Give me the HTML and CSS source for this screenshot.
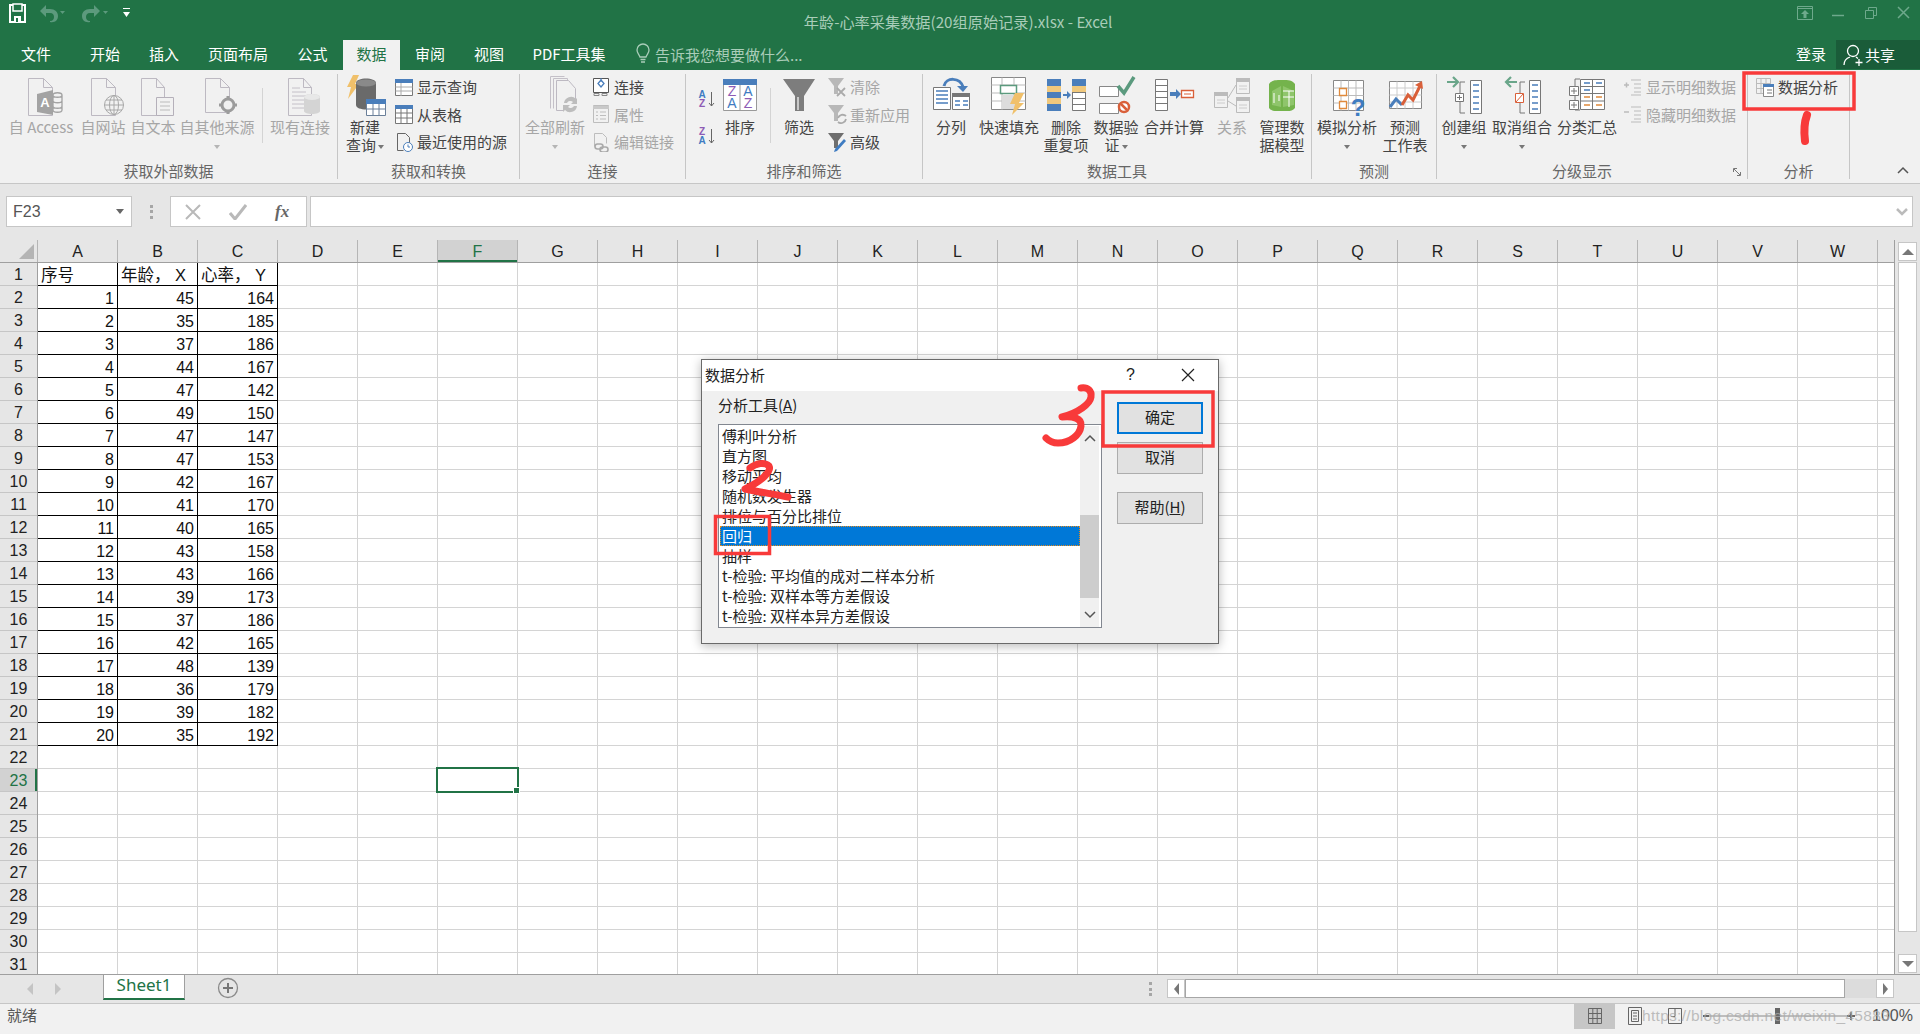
FILE: index.html
```html
<!DOCTYPE html>
<html lang="zh-CN">
<head>
<meta charset="utf-8">
<title>年龄-心率采集数据(20组原始记录).xlsx - Excel</title>
<link rel="stylesheet" href="styles.css">
</head>
<body>
<div class="app">
  <header class="titlebar">
    <div class="qat">
      <svg class="qat-save" width="20" height="20" viewBox="0 0 20 20"><path d="M2 2h15v17H2z" fill="none" stroke="#fff" stroke-width="2"/><path d="M5 1h9v7H5z" fill="#217346" stroke="#fff" stroke-width="1.5"/><path d="M6 13h7v6H6z" fill="#fff"/><path d="M8 15h2v4H8z" fill="#217346"/></svg>
      <svg class="qat-undo" width="28" height="20" viewBox="0 0 28 20"><path d="M9 2 3 8l6 6V10h4c3 0 4 2 4 4s-1 4-4 4v1c5 1 8-2 8-6s-3-7-8-7H9z" fill="#5c9a7d"/><path d="M23 8h5l-2.500 3z" fill="#5c9a7d"/></svg>
      <svg class="qat-redo" width="28" height="20" viewBox="0 0 28 20"><path d="M14 2l6 6-6 6V10h-4c-3 0-4 2-4 4s1 4 4 4v1c-5 1-8-2-8-6s3-7 8-7h4z" fill="#5c9a7d"/><path d="M23 8h5l-2.500 3z" fill="#5c9a7d"/></svg>
      <svg class="qat-more" width="10" height="12" viewBox="0 0 10 12"><path d="M1 1h7v1H1z M1 5h7L4.500 10z" fill="#fff"/></svg>
    </div>
    <div class="doc-title">年龄-心率采集数据(20组原始记录).xlsx - Excel</div>
    <div class="winctl">
      <svg width="33" height="26" viewBox="0 0 33 26"><path d="M9.500 6.500h15v13h-15z M9.500 8.500h15" fill="none" stroke="#6ea98c"/><path d="M17 10l4 4h-2.500v4h-3v-4H13z" fill="#6ea98c"/></svg>
      <svg width="33" height="26" viewBox="0 0 33 26"><path d="M11 15.500h12" stroke="#6ea98c" stroke-width="1.500"/></svg>
      <svg width="33" height="26" viewBox="0 0 33 26"><path d="M11.500 10.500h8v8h-8z M14.500 10V7.500h8v8H20" fill="none" stroke="#6ea98c"/></svg>
      <svg width="33" height="26" viewBox="0 0 33 26"><path d="M11 7l11 11M22 7 11 18" stroke="#6ea98c" stroke-width="1.500"/></svg>
    </div>
  </header>

  <nav class="tabs">
    <div class="tab t72">文件</div>
    <div class="tab t66">开始</div>
    <div class="tab t52">插入</div>
    <div class="tab t92">页面布局</div>
    <div class="tab t61">公式</div>
    <div class="tab t57 tab-on">数据</div>
    <div class="tab t60">审阅</div>
    <div class="tab t58">视图</div>
    <div class="tab t102">PDF工具集</div>
    <div class="tellme">
      <svg width="16" height="24" viewBox="0 0 16 24"><path d="M8 2a6 6 0 0 0-6 6c0 3 2 4 3 7h6c1-3 3-4 3-7a6 6 0 0 0-6-6zM5.500 17.500h5M6 20h4" fill="none" stroke="#a9cdb9" stroke-width="1.300"/></svg>
      <span>告诉我您想要做什么...</span>
    </div>
    <div class="signin">登录</div>
    <div class="share">
      <svg width="22" height="24" viewBox="0 0 22 24"><circle cx="10" cy="8" r="5.500" fill="none" stroke="#fff" stroke-width="1.300"/><path d="M1 22c0-5 3-7 6-8M13 14l2 1.500M16 16v7M12.500 19.500h7" fill="none" stroke="#fff" stroke-width="1.300"/></svg>
      <span>共享</span>
    </div>
  </nav>

  <section class="ribbon">
    <div class="group g1">
      <div class="g-body pl5">
        <div class="big w72 off"><svg class="ico" viewBox="0 0 44 44"><path d="M9.500 5.500h15l9 9v28h-24zM24.500 5.500v9h9" fill="none" stroke="#bdb9c2"/><path d="M18 21l16-4v25l-16-3z" fill="#a3a3a3"/><text x="26" y="34" class="ico-t" fill="#fff">A</text><path d="M34 22c0-3 9-3 9 0v15c0 3-9 3-9 0zM34 22c0 3 9 3 9 0M34 27.500c0 3 9 3 9 0M34 33c0 3 9 3 9 0" fill="#f1f1f1" stroke="#a3a3a3" stroke-width="1.300"/></svg><span class="lbl">自 Access</span></div>
        <div class="big w52 off"><svg class="ico" viewBox="0 0 44 44"><path d="M10.500 5.500h15l9 9v28h-24zM25.500 5.500v9h9" fill="none" stroke="#bdb9c2"/><circle cx="33" cy="32" r="9.500" fill="#f1f1f1" stroke="#a8a8a8"/><path d="M23.500 32h19M25 27h16M25 37h16M33 22.500v19" stroke="#a8a8a8" fill="none"/><ellipse cx="33" cy="32" rx="4.500" ry="9.500" fill="none" stroke="#a8a8a8"/></svg><span class="lbl">自网站</span></div>
        <div class="big w48 off"><svg class="ico" viewBox="0 0 44 44"><path d="M10.500 5.500h15l8 9v28h-23zM25.500 5.500v9h8" fill="none" stroke="#bdb9c2"/><path d="M25.500 24.500h17v18h-17z" fill="#f1f1f1" stroke="#b5b0ba"/><path d="M29 29h10M29 33h10M29 37h10" stroke="#bbb"/></svg><span class="lbl">自文本</span></div>
        <div class="big w80 off"><svg class="ico" viewBox="0 0 44 44"><path d="M10.500 5.500h15l9 9v25h-24zM25.500 5.500v9h9" fill="none" stroke="#bdb9c2"/><circle cx="33" cy="32" r="6" fill="#f1f1f1" stroke="#9c9c9c" stroke-width="3"/><path d="M33 23v3M33 38v3M24 32h3M39 32h3" stroke="#9c9c9c" stroke-width="3"/></svg><span class="lbl">自其他来源<br><i class="caret"></i></span></div>
        <div class="vsep m5"></div>
        <div class="big w66 off ml4"><svg class="ico" viewBox="0 0 44 44"><path d="M10.500 5.500h15l8 9v28h-23zM25.500 5.500v9h8" fill="none" stroke="#bdb9c2"/><path d="M14 15h8M14 19h14M14 23h14M14 27h12M14 31h12M14 35h12" stroke="#c4c0c8"/><path d="M26 24c0-4 16-4 16 0v14c0 4-16 4-16 0z" fill="#d4d4d4"/><ellipse cx="34" cy="24" rx="8" ry="3" fill="#e8e8e8"/></svg><span class="lbl">现有连接</span></div>
      </div>
      <div class="g-label">获取外部数据</div>
    </div>

    <div class="group g2">
      <div class="g-body">
        <div class="big w54 on"><svg class="ico" viewBox="0 0 44 44"><path d="M10 2h6l-4 9h4L5 26l3-12H4z" fill="#f0c06a"/><path d="M13 10c0-6 20-6 20 0v22c0 6-20 6-20 0z" fill="#6a6a6a"/><ellipse cx="23" cy="10" rx="10" ry="3.500" fill="#8a8a8a"/><path d="M23.500 26.500h19v16h-19z" fill="#fff" stroke="#6a7f99"/><path d="M23 26h20v5H23z" fill="#4a7ebb"/><path d="M23.500 36h19M30 31v11M36 31v11" stroke="#6a7f99"/></svg><span class="lbl">新建<br>查询<i class="caret ml2"></i></span></div>
        <div class="stack ml2">
          <div class="small"><svg class="sico" viewBox="0 0 20 20"><path d="M1.500 2.500h17v16h-17z" fill="#fff" stroke="#777"/><path d="M1 2h18v4H1z" fill="#4a7ebb"/><path d="M1.500 10h17M1.500 14h17M7 6v13" stroke="#aaa"/></svg><span>显示查询</span></div>
          <div class="small"><svg class="sico" viewBox="0 0 20 20"><path d="M1.500 1.500h17v18h-17z" fill="#fff" stroke="#777"/><path d="M1 1h18v4H1z" fill="#4a7ebb"/><path d="M1.500 9h17M1.500 14h17M7 5v14M13 5v14" stroke="#777"/></svg><span>从表格</span></div>
          <div class="small"><svg class="sico" viewBox="0 0 20 20"><path d="M3.500 1.500h8l4 4v8M3.500 1.500v17h6" fill="none" stroke="#666"/><circle cx="14" cy="15" r="4.500" fill="#fff" stroke="#4a7ebb"/><path d="M14 12.500V15h2" fill="none" stroke="#4a7ebb"/></svg><span>最近使用的源</span></div>
        </div>
      </div>
      <div class="g-label">获取和转换</div>
    </div>

    <div class="group g3">
      <div class="g-body">
        <div class="big w70 off"><svg class="ico" viewBox="0 0 44 44"><path d="M17.500 3.500h14M17.500 3.500v32M20.500 5.500h14v2M20.500 5.500v30" fill="none" stroke="#c4c0c8"/><path d="M23.500 7.500h12l7 8v14" fill="none" stroke="#bdb9c2"/><path d="M23.500 7.500v30h7" fill="none" stroke="#bdb9c2"/><path d="M31 30a7 7 0 0 1 12-4l2-2v7h-7l2-2a4 4 0 0 0-6 1zM44 33a7 7 0 0 1-12 4l-2 2v-7h7l-2 2a4 4 0 0 0 6-1z" fill="#bdbdbd"/></svg><span class="lbl">全部刷新<br><i class="caret"></i></span></div>
        <div class="stack ml1">
          <div class="small"><svg class="sico" viewBox="0 0 20 20"><path d="M2.500 1.500h15v14h-15z" fill="#fff" stroke="#555"/><path d="M10 3l3 3.500-3 3.500-3-3.500z" fill="#fff" stroke="#4a7ebb" stroke-width="1.300"/><path d="M10 1v4" stroke="#4a7ebb"/><path d="M3 16.500h5v2H3zM11 16.500h5v2h-5z" fill="none" stroke="#888"/></svg><span>连接</span></div>
          <div class="small off"><svg class="sico" viewBox="0 0 20 20"><path d="M2.500 1.500h15v17h-15z" fill="none" stroke="#bdbdbd"/><path d="M2 2h16v3H2z" fill="#c9c9c9"/><path d="M5 8h2M9 8h6M5 11.500h2M9 11.500h6M5 15h2M9 15h6" stroke="#bdbdbd"/></svg><span>属性</span></div>
          <div class="small off"><svg class="sico" viewBox="0 0 20 20"><path d="M3.500 1.500h8l4 4v6M3.500 1.500v13" fill="none" stroke="#bdbdbd"/><rect x="4" y="12" width="8" height="5" rx="2.500" fill="none" stroke="#aaa" stroke-width="1.600"/><rect x="9" y="15" width="8" height="5" rx="2.500" fill="none" stroke="#aaa" stroke-width="1.600"/></svg><span>编辑链接</span></div>
        </div>
      </div>
      <div class="g-label">连接</div>
    </div>

    <div class="group g4">
      <div class="g-body">
        <div class="sortcol">
          <svg width="20" height="20" viewBox="0 0 20 20"><text x="6" y="9.500" class="sort-t" fill="#3f7cc2">A</text><text x="6" y="19" class="sort-t" fill="#8e5bb5">Z</text><path d="M15.500 4v14M13 15l2.500 3 2.500-3" fill="none" stroke="#666"/></svg>
          <svg class="mt17" width="20" height="20" viewBox="0 0 20 20"><text x="6" y="9.500" class="sort-t" fill="#8e5bb5">Z</text><text x="6" y="19" class="sort-t" fill="#3f7cc2">A</text><path d="M15.500 4v14M13 15l2.500 3 2.500-3" fill="none" stroke="#666"/></svg>
        </div>
        <div class="big w48 on"><svg class="ico" viewBox="0 0 44 44"><path d="M5.500 6.500h33v31h-33z" fill="#fff" stroke="#999"/><path d="M5 6h34v6H5z" fill="#4a7ebb"/><path d="M22 12v25" stroke="#999"/><text x="14" y="23" class="ico-t2" fill="#8e5bb5">Z</text><text x="14" y="35" class="ico-t2" fill="#3f7cc2">A</text><text x="30" y="23" class="ico-t2" fill="#3f7cc2">A</text><text x="30" y="35" class="ico-t2" fill="#8e5bb5">Z</text></svg><span class="lbl">排序</span></div>
        <div class="vsep m6"></div>
        <div class="big w56 on"><svg class="ico" viewBox="0 0 44 44"><path d="M6 6h32L27 23v15h-9V23z" fill="#7d7d7d"/><path d="M20 24v13h2V24z" fill="#c9c9c9"/></svg><span class="lbl">筛选</span></div>
        <div class="stack">
          <div class="small off"><svg class="sico" viewBox="0 0 20 20"><path d="M1 1h16l-6 8v8H7V9z" fill="#b8b8b8"/><path d="M10 11l8 8M18 11l-8 8" stroke="#aaa" stroke-width="1.800"/></svg><span>清除</span></div>
          <div class="small off"><svg class="sico" viewBox="0 0 20 20"><path d="M1 1h16l-6 8v8H7V9z" fill="#b8b8b8"/><path d="M11 14a5 5 0 0 1 8-2M19 15a5 5 0 0 1-8 3" fill="none" stroke="#aaa" stroke-width="1.800"/></svg><span>重新应用</span></div>
          <div class="small"><svg class="sico" viewBox="0 0 20 20"><path d="M1 1h16l-6 8v7H7V9z" fill="#6e6e6e"/><path d="M17 7l2 2-9 10-3 1 1-3z" fill="#3f7cc2"/></svg><span>高级</span></div>
        </div>
      </div>
      <div class="g-label">排序和筛选</div>
    </div>

    <div class="group g5">
      <div class="g-body">
        <div class="big w56 on"><svg class="ico" viewBox="0 0 44 44"><path d="M4.500 14.500h17v22h-17z" fill="#fff" stroke="#777"/><path d="M7 18h12M7 22h12M7 26h12M7 30h12" stroke="#4a7ebb" stroke-width="1.300"/><path d="M23.500 20.500h17v16h-17z" fill="#fff" stroke="#777"/><path d="M23 20h18v4H23z" fill="#777"/><path d="M26 28h5M34 28h5M26 32h5M34 32h5" stroke="#4a7ebb" stroke-width="1.300"/><path d="M15 13c2-9 16-9 19 1" fill="none" stroke="#4a7ebb" stroke-width="3"/><path d="M28 13h11l-5 6z" fill="#4a7ebb"/></svg><span class="lbl">分列</span></div>
        <div class="big w60 on"><svg class="ico" viewBox="0 0 44 44"><path d="M4.500 4.500h34v32h-34z" fill="#fff" stroke="#888"/><path d="M4.500 12h34M4.500 20h34M4.500 28h34M15 4.500v32M27 4.500v32" stroke="#bbb"/><path d="M13.500 12.500h16v8h-16z" fill="#fff" stroke="#5b9a7e" stroke-width="1.500"/><path d="M15 22h14v14H15z" fill="#dcdcdc"/><path d="M28 20h9l-5 10h5L25 42l3-11h-5z" fill="#f0c06a"/></svg><span class="lbl">快速填充</span></div>
        <div class="big w54 on"><svg class="ico" viewBox="0 0 44 44"><path d="M3 6h14v32H3z" fill="#4a7ebb"/><path d="M3 13h14v6H3zM3 25h14v6H3z" fill="#f0c87c"/><path d="M28.500 6.500h13v31h-13z" fill="#fff" stroke="#777"/><path d="M28 6h14v7H28z" fill="#4a7ebb"/><path d="M28 13h14v6H28z" fill="#f0c87c"/><path d="M28.500 19.500h13M28.500 25.500h13M28.500 31.500h13" stroke="#777"/><path d="M19 21h4v-3l4 4-4 4v-3h-4z" fill="#4a7ebb"/></svg><span class="lbl">删除<br>重复项</span></div>
        <div class="big w46 on"><svg class="ico" viewBox="0 0 44 44"><path d="M5.500 13.500h19v10h-19zM5.500 30.500h19v10h-19z" fill="#fff" stroke="#888"/><path d="M24 13l6 7L40 4" fill="none" stroke="#5b9a7e" stroke-width="3.500"/><circle cx="30" cy="34" r="5" fill="#fff" stroke="#d9603a" stroke-width="2.500"/><path d="M27 31l6 6" stroke="#d9603a" stroke-width="2.500"/></svg><span class="lbl">数据验<br>证<i class="caret ml2"></i></span></div>
        <div class="big w70 on"><svg class="ico" viewBox="0 0 44 44"><path d="M3.500 6.500h12v31h-12zM3.500 12.500h12M3.500 18.500h12M3.500 24.500h12M3.500 30.500h12" fill="#fff" stroke="#777"/><path d="M18 19h6v-3l5 5-5 5v-3h-6z" fill="#4a7ebb"/><path d="M29.500 17.500h12v7h-12z" fill="#fff" stroke="#d9603a" stroke-width="1.300"/><path d="M32 21h7" stroke="#d9603a"/></svg><span class="lbl">合并计算</span></div>
        <div class="big w46 off"><svg class="ico" viewBox="0 0 44 44"><path d="M4.500 19.500h13v15h-13zM26.500 5.500h13v15h-13zM26.500 24.500h13v15h-13z" fill="#f1f1f1" stroke="#bbb"/><path d="M4 19h14v4H4zM26 5h14v4H26zM26 24h14v4H26z" fill="#bbb"/><path d="M18 25 26 12M18 28l8 5" stroke="#bbb"/><path d="M7 27h8M7 30h8M29 13h8M29 16h8M29 32h8M29 35h8" stroke="#ccc"/></svg><span class="lbl">关系</span></div>
        <div class="big w54 on"><svg class="ico" viewBox="0 0 44 44"><path d="M9 11c3-4 6-4 13-4s10 0 13 4v24c-3 4-7 3-13 3s-10 1-13-3z" fill="#74b34c"/><path d="M12 18l9-5v21l-9-2zM23 13l11 5v14l-11 2z" fill="#8fc56b"/><path d="M23 18h11M23 24h11M29 18v16M14 20v10" stroke="#fff"/><path d="M19 22v6" stroke="#fff"/></svg><span class="lbl">管理数<br>据模型</span></div>
      </div>
      <div class="g-label">数据工具</div>
    </div>

    <div class="group g6">
      <div class="g-body">
        <div class="big w70 on"><svg class="ico" viewBox="0 0 44 44"><path d="M8.500 7.500h30v30h-30z" fill="#fff" stroke="#888"/><path d="M8.500 15h30M8.500 22.500h30M8.500 30h30M16 7.500v30M23.500 7.500v30M31 7.500v30" stroke="#bbb"/><path d="M14.500 15.500h7v7h-7zM14.500 28.500h7v7h-7z" fill="#fff" stroke="#e08a3c" stroke-width="1.300"/><text x="33" y="43" class="ico-q" fill="#3f7cc2">?</text></svg><span class="lbl">模拟分析<br><i class="caret"></i></span></div>
        <div class="big w46 on"><svg class="ico" viewBox="0 0 44 44"><path d="M6.500 8.500h32v27h-32z" fill="#fff" stroke="#888"/><path d="M6.500 15h32M6.500 22h32M6.500 29h32M14 8.500v27M22 8.500v27M30 8.500v27" stroke="#ccc"/><path d="M7 34l6-8 6 6" fill="none" stroke="#4a7ebb" stroke-width="3"/><path d="M19 32l6-10 5 5 7-14" fill="none" stroke="#d9603a" stroke-width="3"/><path d="M32 12l7-4 1 8z" fill="#d9603a"/></svg><span class="lbl">预测<br>工作表</span></div>
      </div>
      <div class="g-label">预测</div>
    </div>

    <div class="group g7">
      <div class="g-body">
        <div class="big w54 on"><svg class="ico" viewBox="0 0 44 44"><path d="M5 9h11M11 4l5 5-5 5" fill="none" stroke="#6aa68a" stroke-width="2.200"/><path d="M23 9h-5v31h5" fill="none" stroke="#777"/><path d="M28.500 7.500h11v33h-11z" fill="#fff" stroke="#777"/><path d="M31 12h6M31 18h6M31 24h6M31 30h6M31 36h6" stroke="#4a7ebb" stroke-width="1.300"/><path d="M13.500 20.500h8v8h-8z" fill="#fff" stroke="#777"/><path d="M15 24.500h5M17.500 22v5" stroke="#777"/></svg><span class="lbl">创建组<br><i class="caret"></i></span></div>
        <div class="big w62 on"><svg class="ico" viewBox="0 0 44 44"><path d="M17 9H6M11 4 6 9l5 5" fill="none" stroke="#6aa68a" stroke-width="2.200"/><path d="M25 9h-5v31h5" fill="none" stroke="#777"/><path d="M29.500 7.500h11v33h-11z" fill="#fff" stroke="#777"/><path d="M32 12h6M32 18h6M32 24h6M32 30h6M32 36h6" stroke="#4a7ebb" stroke-width="1.300"/><path d="M15.500 20.500h8v9h-8z" fill="#fff" stroke="#d9603a"/><path d="M16 29l7-8" stroke="#d9603a"/></svg><span class="lbl">取消组合<br><i class="caret"></i></span></div>
        <div class="big w68 on"><svg class="ico" viewBox="0 0 44 44"><path d="M15 6h-5v31h5" fill="none" stroke="#777"/><path d="M4.500 13.500h9v9h-9zM4.500 27.500h9v9h-9z" fill="#fff" stroke="#777"/><path d="M6 18h6M9 15v6M6 32h6M9 29v6" stroke="#777"/><path d="M15.500 6.500h24v30h-24zM15.500 13.500h24M15.500 20.500h24M15.500 28h24M27.500 6.500v30" fill="#fff" stroke="#777"/><path d="M19 10h6M31 10h6M19 17h6" stroke="#4a7ebb" stroke-width="1.300"/><path d="M19 24h6M31 24h6M19 32h6M31 32h6" stroke="#e08a3c" stroke-width="1.300"/></svg><span class="lbl">分类汇总</span></div>
        <div class="stack ml2">
          <div class="small off"><svg class="sico" viewBox="0 0 20 20"><path d="M1 8h5M3.500 5.500v5" stroke="#bbb" stroke-width="1.500"/><path d="M8 3h10M11 7h7M11 11h7M11 15h7M8 18h10" stroke="#bbb"/></svg><span>显示明细数据</span></div>
          <div class="small off"><svg class="sico" viewBox="0 0 20 20"><path d="M1 8h5" stroke="#bbb" stroke-width="1.500"/><path d="M8 3h10M11 7h7M11 11h7M11 15h7M8 18h10" stroke="#bbb"/></svg><span>隐藏明细数据</span></div>
        </div>
      </div>
      <div class="g-label pr20">分级显示<svg class="launcher" width="9" height="9" viewBox="0 0 9 9"><path d="M.5 4V.5H4M1 1l6 6M4 7.500h3.500V4" fill="none" stroke="#777"/></svg></div>
    </div>

    <div class="group g8">
      <div class="g-body pl7">
        <div class="small"><svg class="sico" viewBox="0 0 20 20"><path d="M1.500 1.500h14v15h-14zM1.500 6.500h14M1.500 11.500h14M6 1.500v15M11 1.500v15" fill="none" stroke="#bbb"/><path d="M8.500 8.500h10v11h-10z" fill="#fff" stroke="#888"/><path d="M8 7h11v3H8z" fill="#4a7ebb"/><path d="M12 13h5M12 16h5" stroke="#777"/></svg><span>数据分析</span></div>
      </div>
      <div class="g-label">分析</div>
    </div>

    <svg class="collapse" width="12" height="8" viewBox="0 0 12 8"><path d="M1 7l5-5 5 5" fill="none" stroke="#555" stroke-width="1.500"/></svg>
  </section>

  <section class="formula">
    <div class="namebox"><span>F23</span><i class="caret caret-dark"></i></div>
    <div class="vdots"><i></i><i></i><i></i></div>
    <div class="fbtns">
      <svg width="16" height="16" viewBox="0 0 16 16"><path d="M1 1l14 14M15 1 1 15" stroke="#b9b9b9" stroke-width="2"/></svg>
      <svg width="18" height="16" viewBox="0 0 18 16"><path d="M1 9l5 6L17 1" fill="none" stroke="#b9b9b9" stroke-width="3"/></svg>
      <span class="fx">fx</span>
    </div>
    <div class="finput"><svg class="fchev" width="12" height="8" viewBox="0 0 12 8"><path d="M1 1l5 5 5-5" fill="none" stroke="#bbb" stroke-width="2.500"/></svg></div>
  </section>

  <section class="sheet">
    <div class="grid-wrap">
      <div class="colheads">
        <div class="corner"><i></i></div>
        <div class="ch">A</div><div class="ch">B</div><div class="ch">C</div><div class="ch">D</div><div class="ch">E</div><div class="ch ch-on">F</div><div class="ch">G</div><div class="ch">H</div><div class="ch">I</div><div class="ch">J</div><div class="ch">K</div><div class="ch">L</div><div class="ch">M</div><div class="ch">N</div><div class="ch">O</div><div class="ch">P</div><div class="ch">Q</div><div class="ch">R</div><div class="ch">S</div><div class="ch">T</div><div class="ch">U</div><div class="ch">V</div><div class="ch">W</div>
      </div>
      <div class="grid-body">
        <div class="rowheads">
          <div class="rh">1</div><div class="rh">2</div><div class="rh">3</div><div class="rh">4</div><div class="rh">5</div><div class="rh">6</div><div class="rh">7</div><div class="rh">8</div><div class="rh">9</div><div class="rh">10</div><div class="rh">11</div><div class="rh">12</div><div class="rh">13</div><div class="rh">14</div><div class="rh">15</div><div class="rh">16</div><div class="rh">17</div><div class="rh">18</div><div class="rh">19</div><div class="rh">20</div><div class="rh">21</div><div class="rh">22</div><div class="rh rh-on">23</div><div class="rh">24</div><div class="rh">25</div><div class="rh">26</div><div class="rh">27</div><div class="rh">28</div><div class="rh">29</div><div class="rh">30</div><div class="rh">31</div>
        </div>
        <div class="cells">
          <div class="data">
            <div class="c ct">序号</div><div class="c ct">年龄，&nbsp;X</div><div class="c ct">心率，&nbsp;Y</div>
            <div class="c">1</div><div class="c">45</div><div class="c">164</div>
            <div class="c">2</div><div class="c">35</div><div class="c">185</div>
            <div class="c">3</div><div class="c">37</div><div class="c">186</div>
            <div class="c">4</div><div class="c">44</div><div class="c">167</div>
            <div class="c">5</div><div class="c">47</div><div class="c">142</div>
            <div class="c">6</div><div class="c">49</div><div class="c">150</div>
            <div class="c">7</div><div class="c">47</div><div class="c">147</div>
            <div class="c">8</div><div class="c">47</div><div class="c">153</div>
            <div class="c">9</div><div class="c">42</div><div class="c">167</div>
            <div class="c">10</div><div class="c">41</div><div class="c">170</div>
            <div class="c">11</div><div class="c">40</div><div class="c">165</div>
            <div class="c">12</div><div class="c">43</div><div class="c">158</div>
            <div class="c">13</div><div class="c">43</div><div class="c">166</div>
            <div class="c">14</div><div class="c">39</div><div class="c">173</div>
            <div class="c">15</div><div class="c">37</div><div class="c">186</div>
            <div class="c">16</div><div class="c">42</div><div class="c">165</div>
            <div class="c">17</div><div class="c">48</div><div class="c">139</div>
            <div class="c">18</div><div class="c">36</div><div class="c">179</div>
            <div class="c">19</div><div class="c">39</div><div class="c">182</div>
            <div class="c">20</div><div class="c">35</div><div class="c">192</div>
          </div>
          <div class="selection"><i></i></div>
        </div>
      </div>
    </div>
    <div class="vscroll">
      <div class="sb-btn"><i class="tri-up"></i></div>
      <div class="sb-thumb"></div>
      <div class="sb-btn sb-end"><i class="tri-down"></i></div>
    </div>
  </section>

  <section class="tabbar">
    <div class="sheetnav"><i class="tri-l"></i><i class="tri-r"></i></div>
    <div class="sheettab">Sheet1</div>
    <svg class="addsheet" width="22" height="22" viewBox="0 0 22 22"><circle cx="11" cy="11" r="9.500" fill="none" stroke="#8a8a8a" stroke-width="1.300"/><path d="M11 6v10M6 11h10" stroke="#777" stroke-width="2"/></svg>
    <div class="vdots hd"><i></i><i></i><i></i></div>
    <div class="hscroll">
      <div class="hs-btn"><i class="tri-ld"></i></div>
      <div class="hs-thumb"></div>
      <div class="hs-track"></div>
      <div class="hs-btn"><i class="tri-rd"></i></div>
    </div>
  </section>

  <footer class="status">
    <div class="ready">就绪</div>
    <div class="views">
      <div class="view view-on"><svg width="14" height="18" viewBox="0 0 14 18"><path d="M.5 1.500h13v15H.5zM.5 6.500h13M.5 11.500h13M4.800 1.500v15M9.200 1.500v15" fill="none" stroke="#666"/></svg></div>
      <div class="view"><svg width="14" height="20" viewBox="0 0 14 20"><path d="M.5 1.500h13v17H.5z" fill="none" stroke="#666"/><path d="M3.500 4.500h7v11h-7z" fill="none" stroke="#666"/><path d="M5 7h4M5 10h4M5 13h4" stroke="#666"/></svg></div>
      <div class="view"><svg width="14" height="18" viewBox="0 0 14 18"><path d="M.5 1.500h13v15H.5z" fill="none" stroke="#666"/><path d="M7 1.500v8H3" fill="none" stroke="#666"/></svg></div>
      <svg class="zoomer" width="165" height="26" viewBox="0 0 165 26"><path d="M8 13h6" stroke="#666" stroke-width="2"/><path d="M14 13h138" stroke="#888"/><path d="M80 5h5v16h-5z" fill="#666"/><path d="M152 13h8M156 9v8" stroke="#666" stroke-width="2"/></svg>
      <div class="pct">100%</div>
    </div>
    <div class="watermark">https://blog.csdn.net/weixin_45883</div>
  </footer>
</div>

<div class="dialog">
  <div class="dlg-title"><span class="dlg-name">数据分析</span><span class="dlg-help">?</span><svg class="dlg-x" width="14" height="14" viewBox="0 0 14 14"><path d="M1 1l12 12M13 1 1 13" stroke="#222" stroke-width="1.200"/></svg></div>
  <div class="dlg-body">
    <div class="dlg-left">
      <div class="dlg-label">分析工具(<u>A</u>)</div>
      <div class="listbox">
        <div class="items">
          <div class="item">傅利叶分析</div>
          <div class="item">直方图</div>
          <div class="item">移动平均</div>
          <div class="item">随机数发生器</div>
          <div class="item">排位与百分比排位</div>
          <div class="item item-on">回归</div>
          <div class="item">抽样</div>
          <div class="item">t-检验: 平均值的成对二样本分析</div>
          <div class="item">t-检验: 双样本等方差假设</div>
          <div class="item">t-检验: 双样本异方差假设</div>
        </div>
        <div class="lb-scroll">
          <div class="lb-btn"><svg width="12" height="8" viewBox="0 0 12 8"><path d="M1 7l5-5 5 5" fill="none" stroke="#555" stroke-width="1.500"/></svg></div>
          <div class="lb-thumb"></div>
          <div class="lb-btn lb-end"><svg width="12" height="8" viewBox="0 0 12 8"><path d="M1 1l5 5 5-5" fill="none" stroke="#555" stroke-width="1.500"/></svg></div>
        </div>
      </div>
    </div>
    <div class="dlg-right">
      <div class="btn btn-def">确定</div>
      <div class="btn">取消</div>
      <div class="btn btn-gap">帮助(<u>H</u>)</div>
    </div>
  </div>
</div>

<svg class="marks" width="1920" height="1034" viewBox="0 0 1920 1034">
  <g fill="none" stroke="#f83a3a" stroke-width="3.500">
    <path d="M1744 73h110v36h-110z"/>
    <path d="M1103 392h110v54h-110z"/>
    <path d="M715.500 516.500h54v37h-54z"/>
  </g>
  <g fill="none" stroke="#f83a3a" stroke-linecap="round" stroke-linejoin="round">
    <path d="M1807 115c-3 8-3 18-2 26" stroke-width="8"/>
    <path d="M1081 388c7-1 11 3 10 9-1 7-13 16-29 20 11-1 20 1 19 9-1 9-11 17-23 17-5 0-9-2-12-5" stroke-width="7"/>
    <path d="M750 468c6-5 15-6 19-2 3 5-7 15-24 23 14 3 28 5 43 8" stroke-width="7"/>
  </g>
</svg>
</body>
</html>
```
FILE: styles.css
```css
* { box-sizing: border-box; }
html, body { margin: 0; padding: 0; }
body {
  width: 1920px; height: 1034px; overflow: hidden; position: relative;
  font-family: "Noto Sans CJK SC", "Liberation Sans", sans-serif;
  font-size: 15px; color: #444; background: #f1f1f1;
}
i { display: block; font-style: normal; }
svg { display: block; flex: none; }
.app { display: flex; flex-direction: column; width: 1920px; height: 1034px; }

/* title bar */
.titlebar {
  height: 40px; background: #217346; display: grid;
  grid-template-columns: 1fr auto 1fr; align-items: center; flex: none;
}
.qat { display: flex; align-items: center; padding-left: 8px; height: 40px; padding-bottom: 16px; }
.qat-undo { margin-left: 9px; }
.qat-redo { margin-left: 15px; }
.qat-more { margin-left: 14px; }
.doc-title { color: #a9cdb9; font-size: 15.200px; line-height: 38px; padding-right: 4px; }
.winctl { display: flex; justify-content: flex-end; padding-bottom: 16px; }

/* tabs */
.tabs { height: 30px; background: #217346; display: flex; flex: none; color: #fff; }
.tab { text-align: center; line-height: 28px; font-size: 15px; white-space: nowrap; }
.t72 { width: 72px; } .t66 { width: 66px; } .t52 { width: 52px; } .t92 { width: 92px; padding-left: 4px; }
.t61 { width: 61px; } .t57 { width: 57px; } .t60 { width: 60px; } .t58 { width: 58px; } .t102 { width: 102px; }
.tab-on { background: #f1f1f1; color: #217346; }
.tellme { display: flex; align-items: center; margin-left: 15px; color: #a9cdb9; gap: 4px; padding-bottom: 2px; font-size: 15px; }
.signin { margin-left: auto; width: 40px; text-align: left; line-height: 28px; font-size: 15px; }
.share {
  width: 84px; height: 29px; background: #1a5c39; display: flex; align-items: center;
  padding-left: 7px; gap: 0; font-size: 15px;
}

/* ribbon */
.ribbon {
  height: 114px; flex: none; background: #f1f1f1; border-bottom: 1px solid #c6c6c6;
  display: flex; padding: 4px 0; position: relative;
}
.group { height: 105px; border-right: 1px solid #c6c6c6; display: flex; flex-direction: column; flex: none; position: relative; }
.g1 { width: 338px; } .g2 { width: 182px; } .g3 { width: 166px; } .g4 { width: 237px; }
.g5 { width: 389px; } .g6 { width: 125px; } .g7 { width: 311px; } .g8 { width: 102px; }
.g-body { height: 86px; display: flex; margin-top: -1px; }
.g-label { height: 19px; line-height: 23px; text-align: center; color: #666; font-size: 15px; white-space: nowrap; }
.pr20 { padding-right: 20px; }
.pl5 { padding-left: 5px; } .pl7 { padding-left: 7px; }
.ml1 { margin-left: 1px; } .ml2 { margin-left: 2px; } .ml4 { margin-left: 4px; }
.launcher { position: absolute; right: 5px; bottom: 2px; }
.collapse { margin: auto 11px 5px auto; }

.big { display: flex; flex-direction: column; align-items: center; flex: none; white-space: nowrap; }
.ico { width: 44px; height: 44px; margin-bottom: 1px; }
.lbl { line-height: 18px; text-align: center; font-size: 15px; color: #444; }
.off .lbl, .off span { color: #a6a6a6; }
.w46 { width: 46px; } .w48 { width: 48px; } .w52 { width: 52px; } .w54 { width: 54px; } .w56 { width: 56px; }
.w60 { width: 60px; } .w62 { width: 62px; } .w66 { width: 66px; } .w68 { width: 68px; } .w70 { width: 70px; } .w72 { width: 72px; } .w80 { width: 80px; }
.caret { display: inline-block; width: 0; height: 0; border: 3.500px solid transparent; border-top: 4px solid #777; border-bottom: 0; vertical-align: middle; }
.off .caret { border-top-color: #b5b5b5; }
.vsep { width: 1px; height: 55px; background: #d4d4d4; margin-top: 15px; flex: none; }
.m5 { margin-left: 5px; } .m6 { margin-left: 6px; }
.stack { display: flex; flex-direction: column; flex: none; }
.small { display: flex; align-items: center; height: 27.500px; gap: 3px; white-space: nowrap; font-size: 15px; }
.sico { width: 20px; height: 20px; }
.sortcol { margin-left: 10px; padding-top: 15px; width: 20px; flex: none; }
.mt17 { margin-top: 17px; }
.sort-t { font: 700 10px "Liberation Sans", sans-serif; text-anchor: middle; }
.ico-t { font: 700 13px "Liberation Sans", sans-serif; text-anchor: middle; }
.ico-t2 { font: 400 14px "Liberation Sans", sans-serif; text-anchor: middle; }
.ico-q { font: 700 24px "Liberation Sans", sans-serif; text-anchor: middle; }

/* formula bar */
.formula { height: 56px; flex: none; background: #e6e6e6; display: flex; padding: 12px 7px 13px 6px; }
.namebox {
  width: 126px; background: #fff; border: 1px solid #c6c6c6; display: flex; align-items: center;
  justify-content: space-between; padding: 0 7px 0 6px; font: 16px "Liberation Sans", sans-serif; color: #555;
}
.caret-dark { border-width: 4px; border-top: 5px solid #666; border-bottom: 0; }
.vdots { width: 38px; flex: none; display: flex; flex-direction: column; justify-content: center; align-items: center; gap: 2.500px; }
.vdots i { width: 3px; height: 3px; background: #a6a6a6; }
.fbtns {
  width: 137px; background: #fff; border: 1px solid #c6c6c6; display: flex; align-items: center;
  padding-left: 14px; gap: 28px; flex: none;
}
.fx { font: italic 700 17px "Liberation Serif", serif; color: #666; }
.finput { flex: 1; margin-left: 3px; background: #fff; border: 1px solid #c6c6c6; display: flex; align-items: center; justify-content: flex-end; padding-right: 4px; }

/* sheet */
.sheet { height: 734px; flex: none; display: flex; background: #fff; overflow: hidden; }
.grid-wrap { width: 1895px; flex: none; display: flex; flex-direction: column; }
.colheads { height: 23px; flex: none; display: flex; background: #e6e6e6; border-bottom: 1px solid #9f9f9f; border-right: 1px solid #9f9f9f; }
.corner { width: 38px; flex: none; position: relative; border-right: 1px solid #b5b5b5; }
.corner i { position: absolute; right: 3px; bottom: 3px; width: 0; height: 0; border-style: solid; border-width: 0 0 15px 15px; border-color: transparent transparent #b4b4b4 transparent; }
.ch {
  width: 80px; flex: none; text-align: center;
  font: 16px/24px "Liberation Sans", sans-serif; color: #222;
  border-right: 1px solid #b5b5b5;
}
.ch-on { background: #d2d2d2; color: #217346; box-shadow: inset 0 -2px 0 #217346; }
.grid-body { flex: 1; display: flex; min-height: 0; }
.rowheads { width: 38px; flex: none; background: #e6e6e6; border-right: 1px solid #9f9f9f; }
.rh {
  height: 23px; text-align: center; font: 16px/23px "Liberation Sans", sans-serif; color: #222;
  border-bottom: 1px solid #c6c6c6;
}
.rh-on { background: #d2d2d2; color: #217346; box-shadow: inset -2px 0 0 #217346; }
.cells {
  flex: 1; position: relative; overflow: hidden; border-right: 1px solid #9f9f9f;
  background-image: linear-gradient(to right, transparent 79px, #d4d4d4 79px), linear-gradient(to bottom, transparent 22px, #d4d4d4 22px);
  background-size: 80px 23px;
}
.data { display: grid; grid-template-columns: repeat(3, 80px); grid-auto-rows: 23px; width: 240px; }
.c {
  background: #fff; border-right: 1px solid #000; border-bottom: 1px solid #000; text-align: right; padding-right: 3px;
  font: 16px/25px "Liberation Sans", "Noto Sans CJK SC", sans-serif; color: #111;
}
.ct { text-align: left; padding: 0 0 0 3px; font-size: 16.500px; white-space: nowrap; overflow: hidden; line-height: 25px; }
.selection { position: absolute; left: 398px; top: 504px; width: 83px; height: 26px; border: 2px solid #217346; }
.selection i { position: absolute; right: -3px; bottom: -3px; width: 7px; height: 7px; background: #217346; border: 1px solid #fff; }

.vscroll { flex: 1; background: #e6e6e6; display: flex; flex-direction: column; padding: 2px 3px 1px 3px; }
.sb-btn { height: 19px; flex: none; background: #fff; border: 1px solid #c6c6c6; display: flex; align-items: center; justify-content: center; }
.sb-thumb { height: 670px; flex: none; background: #fff; border: 1px solid #c6c6c6; margin-top: 1px; }
.sb-end { margin-top: auto; }
.tri-up { border: 6px solid transparent; border-bottom: 6px solid #777; border-top: 0; }
.tri-down { border: 6px solid transparent; border-top: 6px solid #777; border-bottom: 0; }

/* sheet tabs */
.tabbar { height: 30px; flex: none; background: #e6e6e6; border-top: 1px solid #9f9f9f; border-bottom: 1px solid #c6c6c6; display: flex; }
.sheetnav { width: 103px; flex: none; display: flex; align-items: center; padding-left: 27px; gap: 22px; }
.tri-l { border: 6px solid transparent; border-right: 6px solid #c4c4c4; border-left: 0; }
.tri-r { border: 6px solid transparent; border-left: 6px solid #c4c4c4; border-right: 0; }
.sheettab {
  width: 82px; height: 25px; background: #fff; color: #217346; text-align: center; flex: none;
  border-left: 1px solid #9f9f9f; border-right: 1px solid #9f9f9f; border-bottom: 2px solid #217346;
  font: 17px/19px "Noto Sans", "Liberation Sans", sans-serif;
}
.addsheet { margin: 2px 0 0 32px; }
.hd { margin-left: auto; width: 6px; margin-right: 14px; }
.hscroll { width: 727px; height: 19px; margin: 4px 26px 0 0; display: flex; flex: none; }
.hs-btn { width: 18px; background: #fff; border: 1px solid #c6c6c6; display: flex; align-items: center; justify-content: center; flex: none; }
.hs-thumb { width: 660px; background: #fff; border: 1px solid #a6a6a6; flex: none; }
.hs-track { flex: 1; background: #dcdcdc; }
.tri-ld { border: 6px solid transparent; border-right: 5px solid #777; border-left: 0; }
.tri-rd { border: 6px solid transparent; border-left: 5px solid #777; border-right: 0; }

/* status bar */
.status { height: 30px; flex: none; display: flex; background: #f1f1f1; position: relative; }
.ready { padding-left: 7px; line-height: 22px; font-size: 15px; color: #555; }
.views { margin-left: auto; display: flex; height: 26px; margin-top: -1px; }
.view { width: 40px; display: flex; align-items: center; justify-content: center; }
.view-on { width: 41px; background: #c6c6c6; }
.pct { width: 60px; padding-left: 12px; font: 16px/26px "Liberation Sans", sans-serif; color: #555; }
.watermark {
  position: absolute; left: 1642px; top: -1px; font: 15.500px/26px "Liberation Sans", sans-serif;
  color: rgba(170, 170, 170, .75); white-space: nowrap; letter-spacing: .3px;
}

/* dialog */
.dialog {
  position: absolute; left: 701px; top: 359px; width: 518px; height: 285px; background: #f0f0f0;
  border: 1px solid #6a6a6a; box-shadow: 0 2px 10px rgba(0, 0, 0, .28); display: flex; flex-direction: column; color: #222;
}
.dlg-title { height: 31px; background: #fff; display: flex; align-items: center; flex: none; padding: 0 0 2px 3px; }
.dlg-name { font-size: 15px; }
.dlg-help { margin-left: auto; font: 16px "Liberation Sans", sans-serif; }
.dlg-x { margin: 0 23px 0 46px; }
.dlg-body { flex: 1; display: flex; padding-left: 16px; }
.dlg-left { width: 384px; flex: none; }
.dlg-label { height: 33px; line-height: 28px; font-size: 15px; }
.listbox { height: 204px; background: #fff; border: 1px solid #828790; display: flex; padding: 1px 2px 0 1px; }
.items { flex: 1; min-width: 0; }
.item { height: 20px; line-height: 19px; padding-left: 2px; font-size: 15px; white-space: nowrap; color: #222; }
.item-on { background: #0078d7; color: #fff; outline: 1px dotted #e88a1a; outline-offset: -1px; }
.lb-scroll { width: 19px; flex: none; background: #f0f0f0; display: flex; flex-direction: column; }
.lb-btn { height: 24px; flex: none; display: flex; align-items: center; justify-content: center; }
.lb-thumb { height: 83px; background: #cdcdcd; margin-top: 65px; flex: none; }
.lb-end { margin-top: auto; }
.dlg-right { width: 86px; margin-left: 15px; padding-top: 11px; flex: none; }
.btn {
  height: 32px; background: #e1e1e1; border: 1px solid #adadad; text-align: center; line-height: 28px;
  font-size: 15px; color: #222; margin-bottom: 8px;
}
.btn-def { border: 2px solid #0078d7; line-height: 26px; }
.btn-gap { margin-top: 18px; }

.marks { position: absolute; left: 0; top: 0; pointer-events: none; }
```
